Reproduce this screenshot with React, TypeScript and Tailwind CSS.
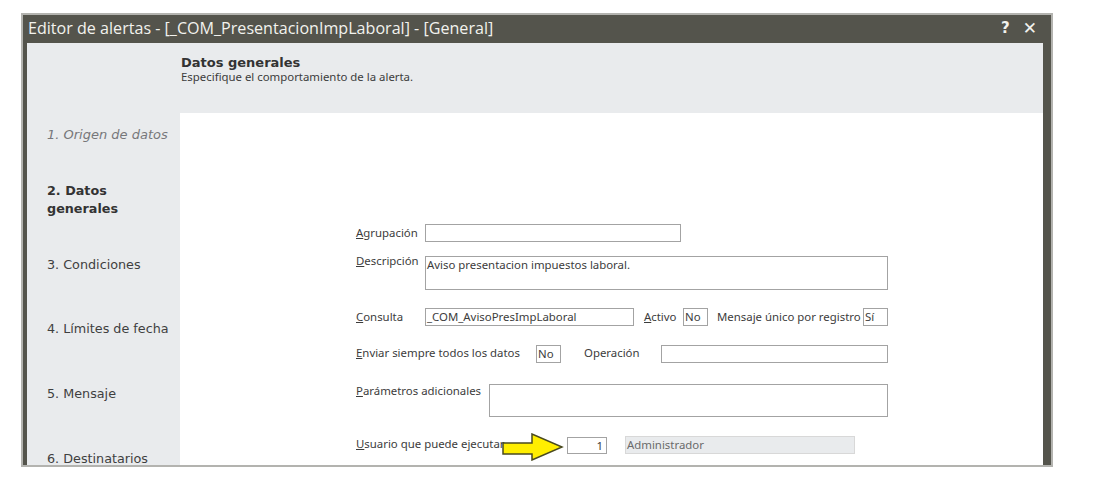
import type { ReactNode } from "react";

const navFont = "font-['DejaVu_Sans',sans-serif]";
const formFont = "font-['Noto_Sans',sans-serif] text-[11.4px] leading-[14px] text-[#3c3c3c]";

function Hot({ k, rest }: { k: string; rest: string }) {
  return (
    <>
      <span className="underline">{k}</span>
      {rest}
    </>
  );
}

function Field({ className, children }: { className: string; children?: ReactNode }) {
  return (
    <div className={`shrink-0 border border-[#a3a3a3] bg-white pl-[1px] pt-[1px] ${className}`}>
      {children}
    </div>
  );
}

export default function App() {
  return (
    <div className="min-h-screen bg-white pl-[21px] pt-[13px]">
      <div className="flex h-[454px] w-[1032px] flex-col overflow-hidden border-2 border-[#b3b3af] bg-[#54544c]">
        <div className="flex h-[27px] shrink-0 items-center justify-between pl-[5px] pr-[14px] font-['Open_Sans',sans-serif] text-[16.1px] text-[#f2f2ee]">
          <span>Editor de alertas - [_COM_PresentacionImpLaboral] - [General]</span>
          <div className="flex items-center gap-[13px] font-['DejaVu_Sans',sans-serif]">
            <span className="text-[15px] font-bold">?</span>
            <span className="text-[17px] font-bold leading-none">✕</span>
          </div>
        </div>

        <div className="ml-[4px] mr-[8px] mt-[1px] flex min-h-0 flex-1 bg-[#e9ebed]">
          <nav className={`w-[153px] shrink-0 pl-[20px] pt-[83px] text-[12.75px] leading-[18px] text-[#3f3f3f] ${navFont}`}>
            <p className="text-[13px] italic text-[#77777a]">1. Origen de datos</p>
            <p className="mt-[38px] font-bold text-[#333333]">
              2. Datos
              <br />
              generales
            </p>
            <p className="mt-[38px]">3. Condiciones</p>
            <p className="mt-[46px]">4. Límites de fecha</p>
            <p className="mt-[47px]">5. Mensaje</p>
            <p className="mt-[47px]">6. Destinatarios</p>
          </nav>

          <main className="flex min-w-0 flex-1 flex-col">
            <header className="h-[70px] shrink-0 pl-[1px] pt-[12px]">
              <h1 className={`text-[13px] font-bold leading-[15px] text-[#333333] ${navFont}`}>
                Datos generales
              </h1>
              <p className={formFont}>Especifique el comportamiento de la alerta.</p>
            </header>

            <section className={`flex-1 bg-white pl-[176px] pt-[111px] ${formFont}`}>
              <div className="flex h-[18px] items-center">
                <label className="w-[69px] shrink-0">
                  <Hot k="A" rest="grupación" />
                </label>
                <Field className="h-[18px] w-[256px]" />
              </div>

              <div className="mt-[14px] flex h-[34px]">
                <label className="-mt-[2px] w-[69px] shrink-0">
                  <Hot k="D" rest="escripción" />
                </label>
                <Field className="h-[34px] w-[463px]">Aviso presentacion impuestos laboral.</Field>
              </div>

              <div className="mt-[18px] flex h-[18px] items-center">
                <label className="w-[69px] shrink-0">
                  <Hot k="C" rest="onsulta" />
                </label>
                <Field className="h-[18px] w-[209px]">_COM_AvisoPresImpLaboral</Field>
                <label className="ml-[10px] w-[39px] shrink-0">
                  <Hot k="A" rest="ctivo" />
                </label>
                <Field className="h-[18px] w-[25px]">No</Field>
                <span className="ml-[9px] w-[146px] shrink-0">Mensaje único por registro</span>
                <Field className="h-[18px] w-[25px]">Sí</Field>
              </div>

              <div className="mt-[19px] flex h-[18px] items-center">
                <label className="-mt-[2px] w-[180px] shrink-0">
                  <Hot k="E" rest="nviar siempre todos los datos" />
                </label>
                <Field className="h-[18px] w-[25px]">No</Field>
                <span className="-mt-[2px] ml-[23px] w-[77px] shrink-0">Operación</span>
                <Field className="h-[18px] w-[227px]" />
              </div>

              <div className="mt-[21px] flex h-[33px]">
                <label className="w-[133px] shrink-0">
                  <Hot k="P" rest="arámetros adicionales" />
                </label>
                <Field className="h-[33px] w-[399px]" />
              </div>

              <div className="relative mt-[19px] flex h-[18px] items-center">
                <label className="-mt-[2px] w-[211px] shrink-0">
                  <Hot k="U" rest="suario que puede ejecutar" />
                </label>
                <Field className="h-[17px] w-[40px] pr-[3px] text-right">1</Field>
                <div className="ml-[18px] h-[18px] w-[230px] border border-[#d8d8d8] bg-[#e9ebed] pl-[1px] pt-[1px] text-[#6a6a6a]">
                  Administrador
                </div>
                <svg
                  className="absolute left-[146px] top-[-3px]"
                  width="62"
                  height="28"
                  viewBox="0 0 62 28"
                >
                  <path
                    d="M1 10H30V1L60 14L30 27V21H1Z"
                    fill="#ffee00"
                    stroke="#4a4a20"
                    strokeWidth="1.5"
                  />
                </svg>
              </div>
            </section>
          </main>
        </div>
      </div>
    </div>
  );
}
